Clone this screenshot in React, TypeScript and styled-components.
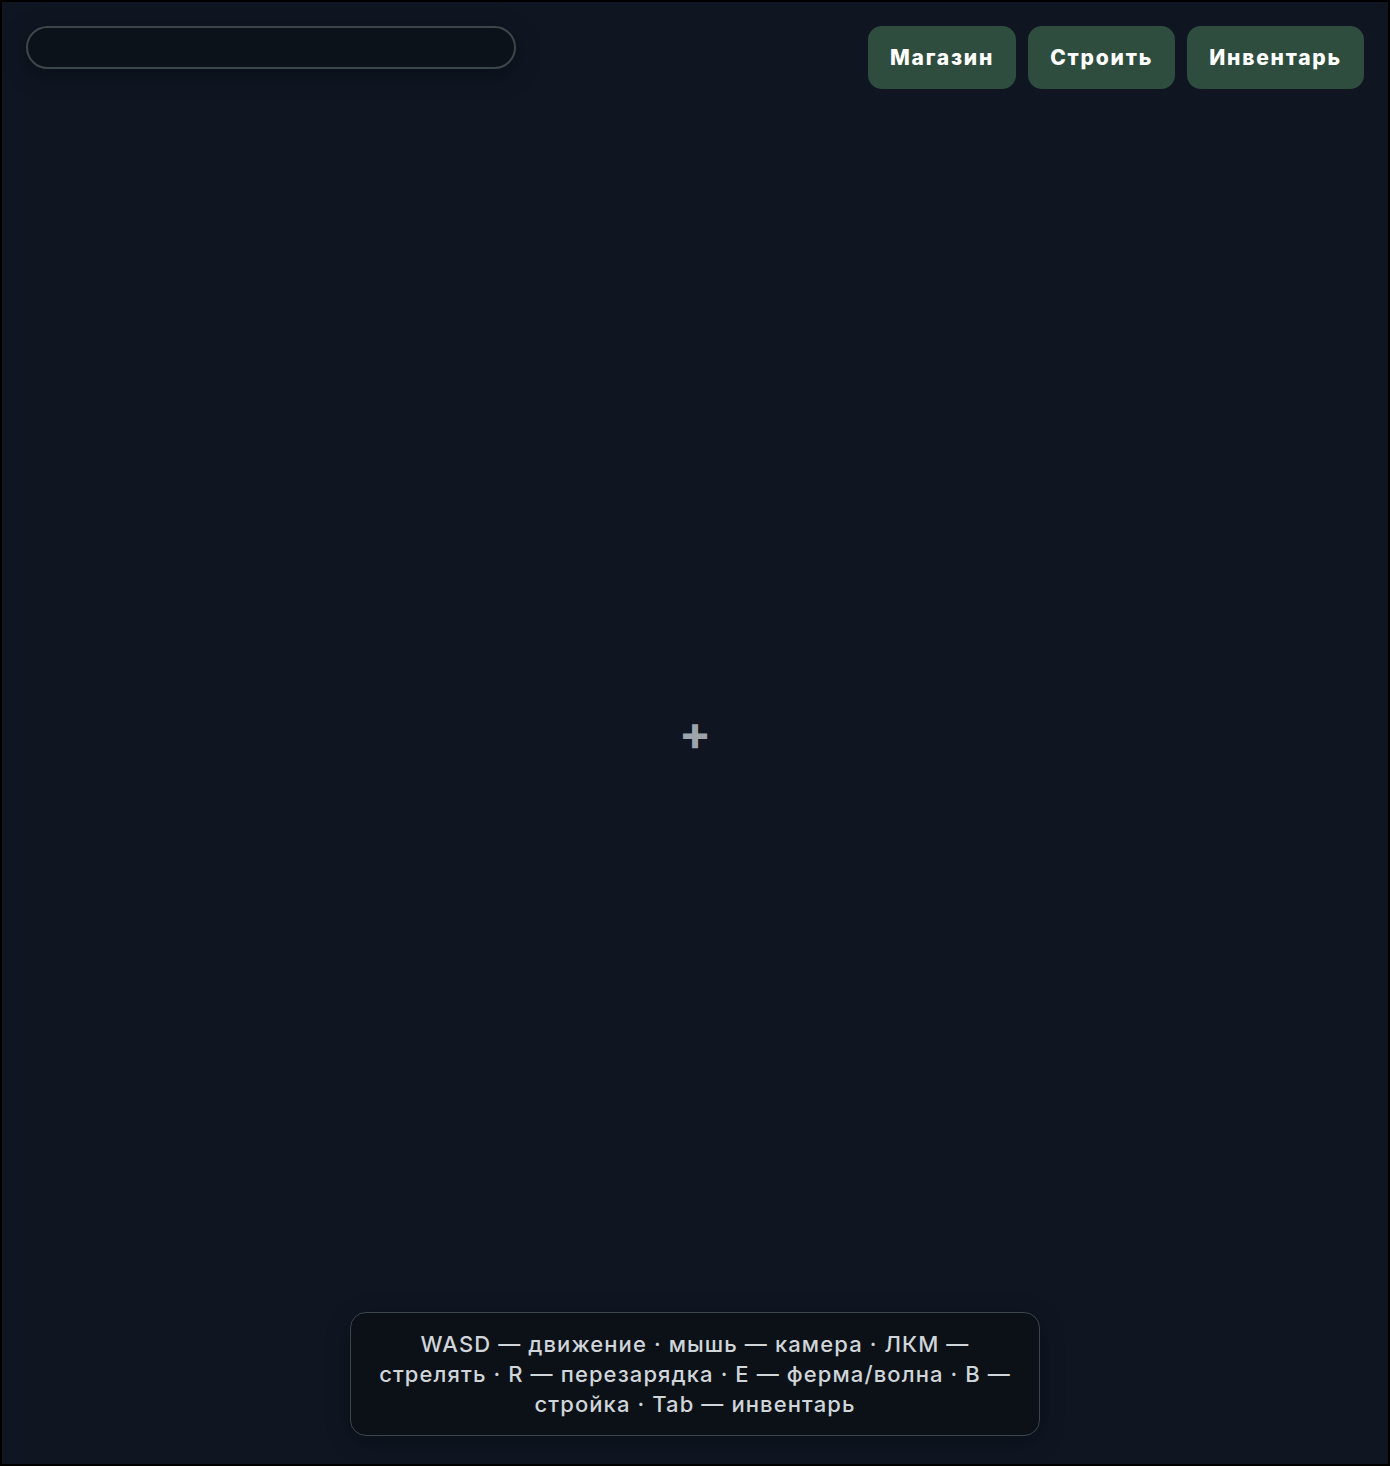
import { createGlobalStyle } from 'styled-components'
import styled from 'styled-components'

const Global = createGlobalStyle`
  html, body {
    margin: 0;
    padding: 0;
    background: #000;
  }
  * { box-sizing: border-box; }
`

const Screen = styled.div`
  height: 1466px;
  border: 2px solid #000;
  background: #0f1622;
  display: flex;
  flex-direction: column;
  font-family: Inter, "Noto Sans", sans-serif;
`

const TopBar = styled.div`
  display: flex;
  justify-content: space-between;
  align-items: flex-start;
  padding: 24px 24px 0 24px;
`

const HealthBar = styled.div`
  width: 490px;
  height: 43px;
  border: 2px solid #3b4749;
  border-radius: 999px;
  background: #0c121a;
  box-shadow: 0 6px 24px rgba(0, 0, 0, 0.35);
`

const Actions = styled.div`
  display: flex;
  gap: 12px;
`

const ActionButton = styled.button`
  height: 63px;
  padding: 0 22px;
  border: none;
  border-radius: 14px;
  background: #2f4d3e;
  color: #fff;
  font-family: Inter, "Noto Sans", sans-serif;
  font-weight: 800;
  font-size: 21px;
  letter-spacing: 1.8px;
  cursor: pointer;
`

const Field = styled.div`
  flex: 1;
  display: flex;
  align-items: center;
  justify-content: center;
`

const Crosshair = styled.div`
  color: #9ea4ab;
  font-size: 48px;
  font-weight: 700;
  line-height: 1;
  margin-top: 64px;
`

const Footer = styled.div`
  display: flex;
  justify-content: center;
  padding-bottom: 28px;
`

const Help = styled.div`
  width: 690px;
  padding: 16px 24px;
  border: 1px solid #3b464b;
  border-radius: 16px;
  background: #0c1118;
  color: #cfd5d8;
  font-size: 22px;
  font-weight: 500;
  letter-spacing: 1.1px;
  line-height: 30px;
  text-align: center;
  box-shadow: 0 6px 24px rgba(0, 0, 0, 0.3);
`

const App = () => {
  const buttons = ['Магазин', 'Строить', 'Инвентарь']

  return <Screen>
    <Global />
    <TopBar>
      <HealthBar />
      <Actions>
        {buttons.map((label) => <ActionButton key={label}>{label}</ActionButton>)}
      </Actions>
    </TopBar>
    <Field>
      <Crosshair>+</Crosshair>
    </Field>
    <Footer>
      <Help>
        WASD — движение · мышь — камера · ЛКМ — стрелять · R — перезарядка · E — ферма/волна · B — стройка · Tab — инвентарь
      </Help>
    </Footer>
  </Screen>
}

export default App
